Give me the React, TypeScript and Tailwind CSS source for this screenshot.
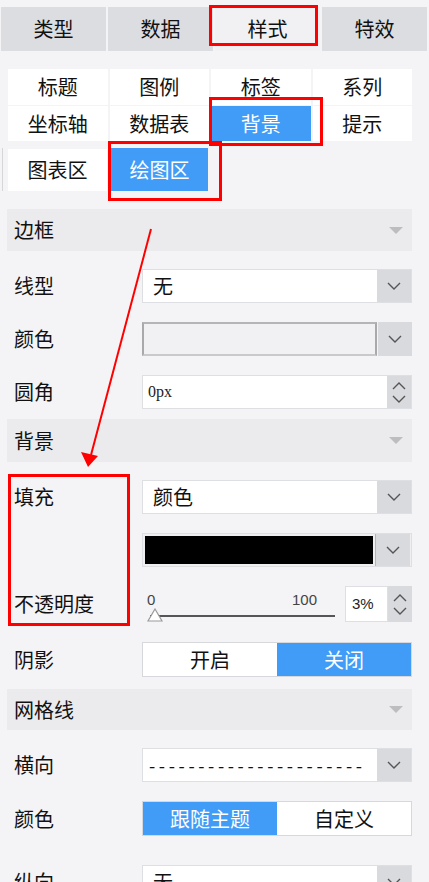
import React from "react";

const Chevron = ({ up = false }: { up?: boolean }) => (
  <svg width="14" height="8" viewBox="0 0 14 8" className="block">
    <polyline
      points={up ? "1,7 7,1 13,7" : "1,1 7,7 13,1"}
      fill="none"
      stroke="#555"
      strokeWidth="1.4"
    />
  </svg>
);

const DropBtn = () => (
  <div className="w-[34px] h-full bg-[#d9dade] flex items-center justify-center">
    <Chevron />
  </div>
);

const Spinner = () => (
  <div className="w-[24px] h-full bg-[#d9dade] flex flex-col items-center justify-center gap-[5px]">
    <Chevron up />
    <Chevron />
  </div>
);

const Select = ({ children }: { children?: React.ReactNode }) => (
  <div className="flex h-[34px] w-[270px] border border-[#dedfe2] bg-white">
    <div className="flex-1 flex items-center pl-[10px] text-[20px] text-[#111] overflow-hidden whitespace-nowrap">
      {children}
    </div>
    <DropBtn />
  </div>
);

const Header = ({ title, mt, h }: { title: string; mt: string; h: string }) => (
  <div
    className={`${mt} ${h} ml-[7px] w-[405px] bg-[#ebebed] flex items-center justify-between pl-[7px] pr-[9px] text-[20px] text-[#111]`}
  >
    <span>{title}</span>
    <span className="w-0 h-0 border-l-[7px] border-r-[7px] border-t-[7px] border-l-transparent border-r-transparent border-t-[#bdbdbf]" />
  </div>
);

const Row = ({
  mt,
  label,
  children,
}: {
  mt: string;
  label: string;
  children: React.ReactNode;
}) => (
  <div className={`${mt} flex items-center pl-[14px]`}>
    <div className="w-[128px] text-[20px] text-[#111] leading-none">{label}</div>
    {children}
  </div>
);

const Toggle = ({ left, right, active }: { left: string; right: string; active: 0 | 1 }) => (
  <div className="flex h-[35px] w-[270px] border border-[#d7d8db] bg-white text-[20px]">
    <div
      className={`flex-1 flex items-center justify-center ${
        active === 0 ? "bg-[#409cf6] text-white" : "bg-white text-[#111]"
      }`}
    >
      {left}
    </div>
    <div
      className={`flex-1 flex items-center justify-center ${
        active === 1 ? "bg-[#409cf6] text-white" : "bg-white text-[#111]"
      }`}
    >
      {right}
    </div>
  </div>
);

export default function App() {
  const top = ["类型", "数据", "样式", "特效"];
  const subs = ["标题", "图例", "标签", "系列", "坐标轴", "数据表", "背景", "提示"];
  return (
    <div className="relative w-[429px] h-[882px] overflow-hidden bg-[#f4f4f6] font-['Noto_Sans_CJK_SC',sans-serif] text-[#111]">
      {/* top tabs */}
      <div className="mt-[7px] ml-[1px] w-[426px] h-[44px] grid grid-cols-4 gap-[2px]">
        {top.map((t, i) => (
          <div
            key={t}
            className={`flex items-center justify-center text-[20px] ${
              i === 2 ? "bg-[#f1f1f3]" : "bg-[#dcdde1]"
            }`}
          >
            {t}
          </div>
        ))}
      </div>

      {/* sub tabs */}
      <div className="mt-[18px] ml-[8px] w-[404px] grid grid-cols-4 gap-x-[2px] gap-y-[1px]">
        {subs.map((t, i) => (
          <div
            key={t}
            className={`flex items-center justify-center text-[20px] ${
              i < 4 ? "h-[36px]" : "h-[35px]"
            } ${i === 6 ? "bg-[#409cf6] text-white" : "bg-white"}`}
          >
            {t}
          </div>
        ))}
      </div>

      {/* third row */}
      <div className="mt-[7px] flex h-[43px] items-stretch">
        <div className="ml-[2px] w-[1px] bg-[#d6d6d9]" />
        <div className="ml-[5px] w-[99px] mt-[1px] bg-white flex items-center justify-center text-[20px]">
          图表区
        </div>
        <div className="ml-[4px] w-[97px] bg-[#409cf6] text-white flex items-center justify-center text-[20px]">
          绘图区
        </div>
      </div>

      <Header title="边框" mt="mt-[18px]" h="h-[42px]" />

      <Row mt="mt-[18px]" label="线型">
        <Select>无</Select>
      </Row>

      <Row mt="mt-[19px]" label="颜色">
        <div className="flex h-[34px] w-[270px]">
          <div className="w-[235px] h-full border-2 border-t-[#b5b5b7] border-l-[#a9a9ab] border-r-[#a9a9ab] border-b-[#c9c9cb] bg-[#f1f1f3]" />
          <div className="ml-[1px] flex-1 h-full">
            <DropBtn />
          </div>
        </div>
      </Row>

      <Row mt="mt-[19px]" label="圆角">
        <div className="flex h-[34px] w-[270px] border border-[#dedfe2] bg-white">
          <div className="flex-1 flex items-center pl-[5px] text-[16px] font-['Liberation_Serif',serif] text-[#222]">
            0px
          </div>
          <Spinner />
        </div>
      </Row>

      <Header title="背景" mt="mt-[10px]" h="h-[43px]" />

      <Row mt="mt-[18px]" label="填充">
        <Select>颜色</Select>
      </Row>

      <Row mt="mt-[19px]" label="">
        <div className="flex h-[34px] w-[270px] border border-[#dedfe2] bg-[#efeff1]">
          <div className="w-[233px] h-full p-[2px] border-r border-[#b5b5b7]">
            <div className="w-full h-full bg-black" />
          </div>
          <div className="flex-1 h-full">
            <DropBtn />
          </div>
        </div>
      </Row>

      <Row mt="mt-[19px]" label="不透明度">
        <div className="flex h-[36px] w-[270px] items-stretch">
          <div className="w-[203px] pl-[5px] pr-[10px] flex flex-col justify-center">
            <div className="flex justify-between pr-[18px] text-[15px] leading-none text-[#444] font-['Liberation_Sans',sans-serif]">
              <span>0</span>
              <span>100</span>
            </div>
            <div className="relative mt-[8px] ml-[3px] h-[2px] bg-[#555]">
              <svg
                width="16"
                height="14"
                viewBox="0 0 16 14"
                className="absolute left-[-3px] top-[-7px]"
              >
                <polygon points="8,1 15,13 1,13" fill="#fff" stroke="#9a9a9a" strokeWidth="1.2" />
              </svg>
            </div>
          </div>
          <div className="w-[43px] bg-white border border-[#dedfe2] flex items-center pl-[6px] text-[15px] font-['Liberation_Sans',sans-serif] text-[#222]">
            3%
          </div>
          <Spinner />
        </div>
      </Row>

      <Row mt="mt-[20px]" label="阴影">
        <Toggle left="开启" right="关闭" active={1} />
      </Row>

      <Header title="网格线" mt="mt-[12px]" h="h-[41px]" />

      <Row mt="mt-[18px]" label="横向">
        <Select>
          <span className="tracking-[3.6px] text-[18px] ml-[-4px]">----------------------</span>
        </Select>
      </Row>

      <Row mt="mt-[19px]" label="颜色">
        <Toggle left="跟随主题" right="自定义" active={0} />
      </Row>

      <Row mt="mt-[29px]" label="纵向">
        <Select>无</Select>
      </Row>

      {/* annotations */}
      <div className="absolute left-[209px] top-[5px] w-[109px] h-[41px] border-[3px] border-[#f00]" />
      <div className="absolute left-[209px] top-[97px] w-[114px] h-[49px] border-[3px] border-[#f00]" />
      <div className="absolute left-[108px] top-[141px] w-[114px] h-[60px] border-[3px] border-[#f00]" />
      <div className="absolute left-[8px] top-[474px] w-[122px] h-[152px] border-[3px] border-[#f00]" />
      <svg className="absolute left-0 top-0 pointer-events-none" width="429" height="882">
        <line x1="151" y1="229" x2="91" y2="455" stroke="#f00" strokeWidth="2" />
        <polygon points="88,467 81,452 98,456" fill="#f00" />
      </svg>
    </div>
  );
}
